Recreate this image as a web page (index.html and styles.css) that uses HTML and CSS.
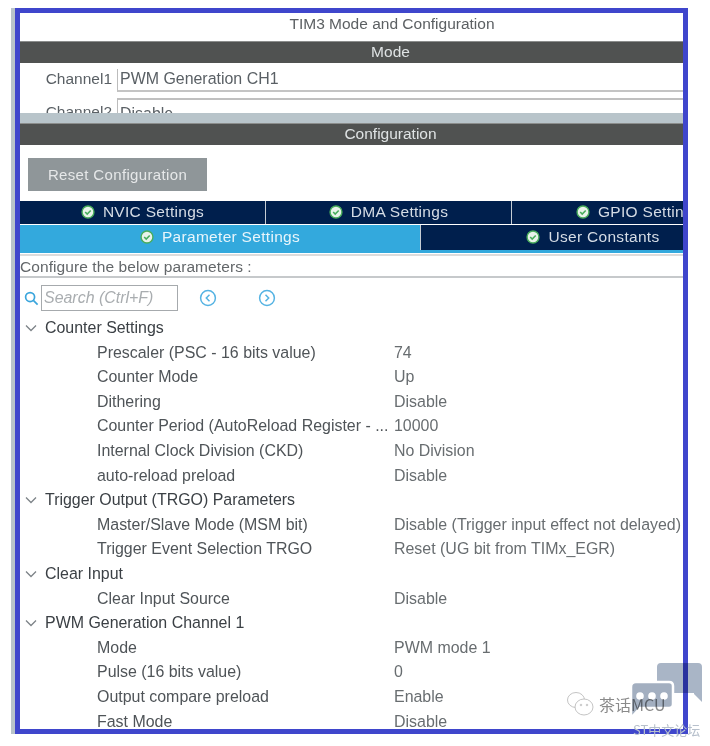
FILE: index.html
```html
<!DOCTYPE html>
<html lang="en">
<head>
  <meta charset="UTF-8" />
  <meta name="viewport" content="width=device-width, initial-scale=1.0"/>
  <title>TIM3 Mode and Configuration</title>
  <link rel="stylesheet" href="styles.css">
</head>
<body>

  <div class="frame">
    <div class="panel">
      <div class="title">TIM3 Mode and Configuration</div>
      <div class="band">Mode</div>
      <div class="mode-area">
        <div class="channel">
          <label>Channel1</label>
          <div class="channel-value">PWM Generation CH1</div>
        </div>
        <div class="channel">
          <label>Channel2</label>
          <div class="channel-value">Disable</div>
        </div>
      </div>
      <div class="splitter"></div>
      <div class="band">Configuration</div>

      <button class="reset-btn">Reset Configuration</button>

      <div class="tabs tabs-top">
        <div class="tab"><svg class="check" viewBox="0 0 16 16"><use href="#check"/></svg>NVIC Settings</div>
        <div class="tab"><svg class="check" viewBox="0 0 16 16"><use href="#check"/></svg>DMA Settings</div>
        <div class="tab"><svg class="check" viewBox="0 0 16 16"><use href="#check"/></svg>GPIO Settings</div>
      </div>
      <div class="tabs tabs-bottom">
        <div class="tab active"><svg class="check" viewBox="0 0 16 16"><use href="#check"/></svg>Parameter Settings</div>
        <div class="tab"><svg class="check" viewBox="0 0 16 16"><use href="#check"/></svg>User Constants</div>
      </div>

      <div class="configure">Configure the below parameters :</div>

      <div class="search-row">
        <svg class="search-icon" viewBox="0 0 16 16"><circle cx="6.500" cy="6.500" r="4.800"/><path d="M10 10l4.500 4.500"/></svg>
        <div class="search-box">Search (Ctrl+F)</div>
        <svg class="nav-btn" viewBox="0 0 18 18"><circle cx="9" cy="9" r="7.400"/><path d="M10.500 5.800L7.300 9l3.200 3.200"/></svg>
        <svg class="nav-btn" viewBox="0 0 18 18"><circle cx="9" cy="9" r="7.400"/><path d="M7.500 5.800L10.700 9l-3.200 3.200"/></svg>
      </div>

      <div id="tree"></div>
    </div>
  </div>
  <div class="side-strip"></div>

  <!-- watermark over the corner -->
  <div class="watermark">
    <svg class="wechat" viewBox="0 0 28 26">
      <ellipse cx="10" cy="9" rx="8.500" ry="7.500"/>
      <ellipse cx="18" cy="16" rx="9" ry="8"/>
      <circle cx="15" cy="14" r="0.800"/>
      <circle cx="21" cy="14" r="0.800"/>
    </svg>
    <span class="wm-name">茶话MCU</span>
  </div>
  <svg class="st-logo" viewBox="0 0 72 58">
    <path class="bubble-back" d="M31 1h37q4 0 4 4v35l-8-8V31H31q-4 0-4-4V5q0-4 4-4z"/>
    <path class="bubble-front" d="M6 20h33q4 0 4 4v18q0 4-4 4H10l-9 10V25q0-5 5-5z"/>
    <circle class="dot" cx="10" cy="34" r="3.800"/>
    <circle class="dot" cx="22" cy="34" r="3.800"/>
    <circle class="dot" cx="34" cy="34" r="3.800"/>
  </svg>
  <div class="st-name">ST中文论坛</div>

  <svg class="defs" width="0" height="0">
    <symbol id="check" viewBox="0 0 16 16">
      <circle cx="8" cy="8" r="6.800" fill="#e9f3ea" stroke="#49ad5c" stroke-width="1.600"/>
      <path d="M4.800 8l2.300 2.400 4-4.200" fill="none" stroke="#49ad5c" stroke-width="1.800"/>
    </symbol>
  </svg>

  <script>
    const groups = [
      { name: "Counter Settings", rows: [
        ["Prescaler (PSC - 16 bits value)", "74"],
        ["Counter Mode", "Up"],
        ["Dithering", "Disable"],
        ["Counter Period (AutoReload Register - ...", "10000"],
        ["Internal Clock Division (CKD)", "No Division"],
        ["auto-reload preload", "Disable"]
      ]},
      { name: "Trigger Output (TRGO) Parameters", rows: [
        ["Master/Slave Mode (MSM bit)", "Disable (Trigger input effect not delayed)"],
        ["Trigger Event Selection TRGO", "Reset (UG bit from TIMx_EGR)"]
      ]},
      { name: "Clear Input", rows: [
        ["Clear Input Source", "Disable"]
      ]},
      { name: "PWM Generation Channel 1", rows: [
        ["Mode", "PWM mode 1"],
        ["Pulse (16 bits value)", "0"],
        ["Output compare preload", "Enable"],
        ["Fast Mode", "Disable"]
      ]}
    ];

    const tree = document.getElementById("tree");
    groups.forEach(group => {
      let html = `<div class="tree-head"><svg class="chevron" viewBox="0 0 12 8"><path d="M1 1.500l5 5 5-5"/></svg><span>${group.name}</span></div>`;
      group.rows.forEach(row => {
        html += `<div class="tree-row"><span class="param">${row[0]}</span><span class="value">${row[1]}</span></div>`;
      });
      tree.innerHTML += html;
    });
  </script>
</body>
</html>
```

FILE: styles.css
```css
html, body {
  margin: 0;
  padding: 0;
  height: 746px;
  overflow: hidden;
  background-color: #ffffff;
}

body {
  font-family: "Liberation Sans", Arial, sans-serif;
  font-size: 15.950px;
  color: #4a4f52;
}

.frame {
  box-sizing: border-box;
  width: 673px;
  height: 726px;
  margin: 8px 0 0 15px;
  border: 5px solid #3f46cc;
  overflow: hidden;
}

.panel {
  width: 663px;
  height: 716px;
  overflow: hidden;
  filter: blur(0.55px);
}

.side-strip {
  position: absolute;
  left: 11px;
  top: 8px;
  width: 4px;
  height: 726px;
  background-color: #b9c4ca;
}

.title {
  box-sizing: border-box;
  height: 28px;
  padding-left: 81px;
  line-height: 21px;
  text-align: center;
  font-size: 15.500px;
  color: #5c6063;
}

.band {
  box-sizing: border-box;
  height: 22px;
  padding-left: 78px;
  line-height: 19px;
  text-align: center;
  font-size: 15.500px;
  background-color: #505251;
  color: #dfe3e4;
  border-top: 1px solid #8b8d8c;
}

.mode-area {
  height: 50px;
  overflow: hidden;
}

.channel {
  display: flex;
  margin-top: 6px;
  height: 23px;
  line-height: 20px;
}

.channel + .channel {
  line-height: 28px;
}

.channel label {
  width: 92px;
  text-align: right;
  margin-right: 5px;
  font-size: 15.500px;
  color: #5a6065;
}

.channel-value {
  flex: 1;
  box-sizing: border-box;
  padding-left: 2px;
  border-left: 1px solid #bcbcbc;
  border-bottom: 2px solid #c4c4c4;
  color: #5a6065;
}

.channel + .channel .channel-value {
  border-top: 2px solid #c0c0c0;
  border-bottom: none;
}

.splitter {
  height: 10px;
  background-color: #b8c4ca;
}

.reset-btn {
  display: block;
  box-sizing: border-box;
  width: 179px;
  height: 33px;
  margin: 13px 0 10px 8px;
  padding: 0;
  border: none;
  background-color: #8f9699;
  color: #e6e8e9;
  font-family: inherit;
  font-size: 15px;
  letter-spacing: 0.350px;
}

.tabs {
  display: flex;
  width: 663px;
  overflow: hidden;
}

.tab {
  flex: none;
  display: flex;
  align-items: center;
  justify-content: center;
  box-sizing: border-box;
  background-color: #001f4d;
  color: #d5dce5;
  font-size: 15.500px;
  letter-spacing: 0.300px;
  white-space: nowrap;
}

.tabs-top {
  height: 23px;
  margin-bottom: 1px;
}

.tabs-top .tab {
  width: 246px;
  padding-bottom: 2px;
  border-right: 1px solid #c5ccd4;
}

.tabs-top .tab:last-child {
  width: 254px;
}

.tabs-bottom {
  height: 25px;
  border-bottom: 3px solid #33a9dd;
}

.tabs-bottom .tab {
  width: 344px;
  padding-bottom: 2px;
}

.tabs-bottom .tab.active {
  width: 401px;
  background-color: #33a9dd;
  color: #e8f5fb;
  border-right: 1px solid #c5ccd4;
}

.check {
  width: 14px;
  height: 14px;
  margin-right: 8px;
}

.configure {
  height: 20px;
  line-height: 22px;
  border-top: 2px solid #dcdcdc;
  border-bottom: 2px solid #c6c9cb;
  margin-top: 1px;
  letter-spacing: 0.080px;
  font-size: 15.500px;
  color: #63676a;
  white-space: nowrap;
}

.search-row {
  display: flex;
  align-items: center;
  height: 26px;
  padding: 7px 0 5px 4px;
}

.search-icon {
  width: 15px;
  height: 15px;
  margin-right: 2px;
  fill: none;
  stroke: #3aa5dc;
  stroke-width: 1.800;
}

.search-box {
  box-sizing: border-box;
  width: 137px;
  height: 26px;
  line-height: 23px;
  padding-left: 2px;
  border: 1px solid #a6aaad;
  font-style: italic;
  color: #a9adb0;
  white-space: nowrap;
}

.nav-btn {
  width: 18px;
  height: 18px;
  margin-left: 21px;
  fill: none;
  stroke: #55b3e3;
  stroke-width: 1.500;
}

.nav-btn + .nav-btn {
  margin-left: 41px;
}

.tree-head, .tree-row {
  height: 24.600px;
  white-space: nowrap;
}

.tree-head {
  display: flex;
  align-items: center;
  padding-left: 5px;
  color: #3b4045;
}

.tree-head span {
  line-height: 23.800px;
  height: 24.600px;
}

.chevron {
  width: 12px;
  height: 8px;
  margin-right: 8px;
  fill: none;
  stroke: #7d8388;
  stroke-width: 1.300;
}

.tree-row {
  display: flex;
  line-height: 23.800px;
  padding-left: 77px;
}

.param {
  width: 297px;
  flex: none;
  color: #4f5458;
}

.value {
  color: #686d70;
}

/* watermark */
.watermark {
  position: absolute;
  left: 566px;
  top: 691px;
  display: flex;
  align-items: center;
}

.wechat {
  width: 28px;
  height: 26px;
  margin-right: 5px;
  fill: #ffffff;
  stroke: #b5b5b5;
  stroke-width: 0.800;
}

.wm-name {
  font-family: "Noto Sans CJK SC", "Liberation Sans", sans-serif;
  font-size: 16px;
  color: #8a8a8a;
}

.st-logo {
  position: absolute;
  left: 630px;
  top: 662px;
  width: 72px;
  height: 58px;
  mix-blend-mode: multiply;
}

.bubble-back {
  fill: #a9b5c6;
}

.bubble-front {
  fill: #a3afc0;
  stroke: #ffffff;
  stroke-width: 2.500;
}

.dot {
  fill: #ffffff;
}

.st-name {
  position: absolute;
  left: 633px;
  top: 720px;
  font-family: "Noto Sans CJK SC", "Liberation Sans", sans-serif;
  font-size: 13px;
  color: #b7c0cc;
  white-space: nowrap;
}

.defs {
  position: absolute;
}
```
